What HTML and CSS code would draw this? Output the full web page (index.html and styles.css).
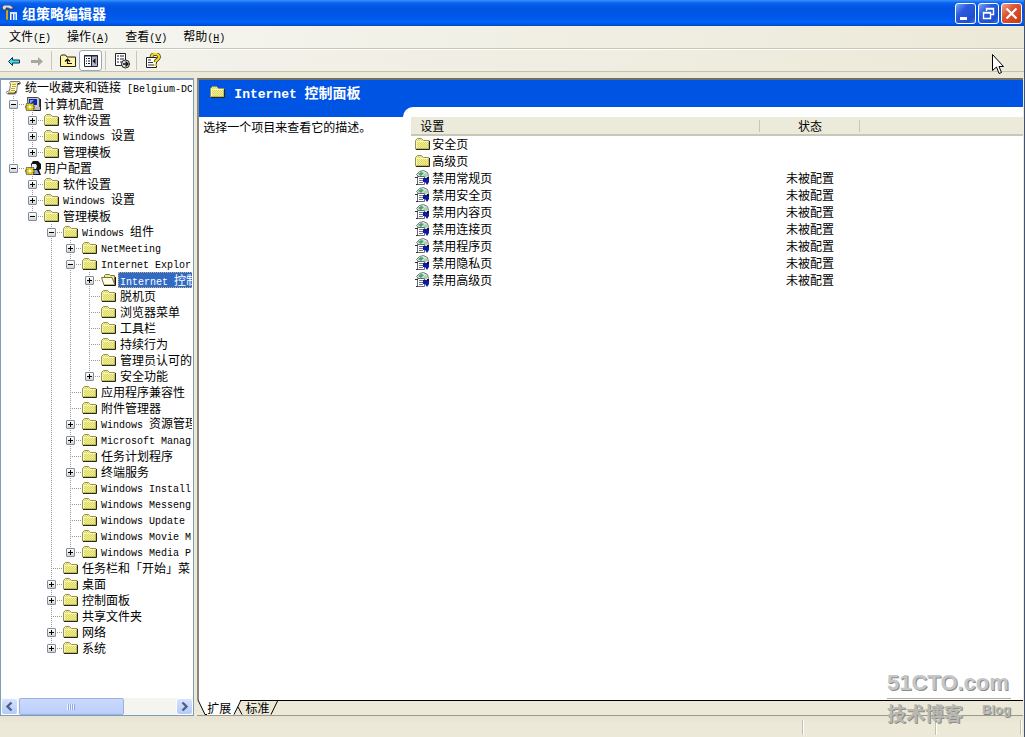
FILE: index.html
```html
<!DOCTYPE html>
<html lang="zh-CN">
<head>
<meta charset="utf-8">
<title>组策略编辑器</title>
<link rel="stylesheet" href="styles.css">
</head>
<body>
<svg class="defs" aria-hidden="true">
  <defs>
    <pattern id="dither" width="2" height="2" patternUnits="userSpaceOnUse"><rect width="2" height="2" fill="#f3f09c"/><rect width="1" height="1" fill="#dcd65a"/><rect x="1" y="1" width="1" height="1" fill="#dcd65a"/></pattern>
    <symbol id="folder" viewBox="0 0 16 16">
      <path d="M.5 13V4.500l2-2h4l2 2h5.500V13z" fill="url(#dither)" stroke="#96925a"/>
      <path d="M1.500 12V5.500h12" fill="none" stroke="#f8f6b8"/>
      <path d="M1 13.500h13.500V5" fill="none" stroke="#2a2914"/>
    </symbol>
    <symbol id="folder-open" viewBox="0 0 16 16">
      <path d="M3.500 12V3.500l1-1h4l1 1h4V13" fill="#f0ec98" stroke="#77743c"/>
      <path d="M.5 5.500h10.500l3 7.500H3z" fill="#fffde0" stroke="#77743c"/>
      <path d="M3 13.500h11.500V5" fill="none" stroke="#111"/>
    </symbol>
    <symbol id="scroll" viewBox="0 0 16 16">
      <path d="M4.500 1.500h9l1 1.500-1 1.500h-2l-1 8-1 1.500h-8l-1-1.500 1-1.500h2l1-7-1-1z" fill="#fffbe0" stroke="#777"/>
      <path d="M6 4.500h4M6 6.500h4M5 8.500h4M5 10.500h4" stroke="#c2ad21"/>
      <path d="M11 4l3-1M2 13h7l1-2" fill="none" stroke="#111"/>
      <path d="M5 3h7M2 12h6" stroke="#ecd83b"/>
    </symbol>
    <symbol id="gear" viewBox="0 0 10 8">
      <path d="M4 0h2v1l2-1 1 1-1 2h2v2H8l1 2-1 1-2-1v1H4V7L2 8 1 7l1-2H0V3h2L1 1l1-1 2 1z" fill="#e5cf22" stroke="#333" stroke-width=".6"/>
      <circle cx="5" cy="4" r="1.300" fill="#fff"/>
    </symbol>
    <symbol id="computer" viewBox="0 0 16 16">
      <path d="M2.500 1.500h10l2 1v9H3z" fill="#c6c9d6" stroke="#444"/>
      <path d="M4 3h8v6H4z" fill="#1227a8"/><path d="M5 4h4L5 8z" fill="#6aa2ff"/>
      <path d="M6 11h9v3H6z" fill="#b9bcc8"/><path d="M15.500 3v11.500H7" fill="none" stroke="#222"/>
      <use href="#gear" x="0" y="7" width="10" height="8"/>
    </symbol>
    <symbol id="user" viewBox="0 0 16 16">
      <path d="M6 4l2-3h5l3 3v5l-2 1 2 5H8z" fill="#111"/>
      <path d="M7 4h4l1 2-1 3H8l-1-2z" fill="#e8edf6"/><path d="M9 10h3l2 4H9z" fill="#8fa6e0"/>
      <use href="#gear" x="0" y="7" width="10" height="8"/>
    </symbol>
    <symbol id="policy" viewBox="0 0 16 16">
      <path d="M1.500 4.500l3-3 4-1 4 2 1 4-2 2-7-1z" fill="#dfe4e2" stroke="#777"/>
      <path d="M3 4l3-2 3 1-3 3z" fill="#3aa866"/><path d="M8 5l3-2 2 3-3 1z" fill="#9ad8ac"/>
      <path d="M2.500 6.500h7v8h-7z" fill="#fff" stroke="#667"/>
      <path d="M4 8.500h4M4 10.500h4M4 12.500h4" stroke="#6d7386"/>
      <path d="M8 8h6v4l-2 3-2-3H8z" fill="#1018a8"/><path d="M12 7h2v2h-2z" fill="#111"/><path d="M0 7h3v1H0zM1 14h2v1H1z" fill="#333"/>
    </symbol>
  </defs>
</svg>

<div class="window">
  <header class="titlebar">
    <svg class="app-icon" viewBox="0 0 16 16"><path d="M0 2l2-2h6l3 2v2H8L6 3H4v2H1z" fill="#d8d8d8" stroke="#333" stroke-width=".8"/><path d="M4 5h2v10H4z" fill="#e5c832" stroke="#554b10" stroke-width=".5"/><path d="M8 15V8h1.500v7M11 15V8h1.500v7M13.500 15V8H15v7" fill="#fff"/><path d="M8 7h7v2H8z" fill="#dfe3ee"/></svg>
    <h1 class="window-title">组策略编辑器</h1>
    <div class="window-buttons">
      <button class="win-btn" aria-label="最小化"><svg viewBox="0 0 19 19"><path d="M4 13h7v3H4z" fill="#fff"/></svg></button>
      <button class="win-btn" aria-label="还原"><svg viewBox="0 0 19 19"><path d="M7.500 7V4.500h7v6H12M7 5h8M4.500 8.500h7v6h-7zM4 9h8" fill="none" stroke="#fff" stroke-width="1.400"/></svg></button>
      <button class="win-btn close" aria-label="关闭"><svg viewBox="0 0 19 19"><path d="M4.500 4.500l10 10M14.500 4.500l-10 10" stroke="#fff" stroke-width="2.200"/></svg></button>
    </div>
  </header>

  <nav class="menubar">
    <button class="menu">文件<span class="lat">(<u>F</u>)</span></button>
    <button class="menu">操作<span class="lat">(<u>A</u>)</span></button>
    <button class="menu">查看<span class="lat">(<u>V</u>)</span></button>
    <button class="menu">帮助<span class="lat">(<u>H</u>)</span></button>
  </nav>

  <div class="toolbar">
    <button class="tool" aria-label="后退"><svg viewBox="0 0 16 16"><path d="M2.500 8.500l4-4V7h7v3h-7v2.500z" fill="#45dfe8" stroke="#062f50"/></svg></button>
    <button class="tool" aria-label="前进" disabled><svg viewBox="0 0 16 16"><path d="M14 8.500L9 4v3H2v3h7v3z" fill="#aaa89c"/></svg></button>
    <span class="sep"></span>
    <button class="tool" aria-label="上一级"><svg viewBox="0 0 16 16"><path d="M.5 13.500v-10l1-1.500h4l1.500 2h8.500v9.500z" fill="#fff7a0" stroke="#222"/><path d="M7.500 6v4.500H12M5 8.500l2.500-2.500L10 8.500" fill="none" stroke="#111" stroke-width="1.200"/></svg></button>
    <button class="tool pressed" aria-label="显示/隐藏控制台树"><svg viewBox="0 0 16 16"><path d="M1.500 2.500h13v11h-13z" fill="#fff" stroke="#223"/><path d="M8 3h6v10H8z" fill="#aeb4cf"/><path d="M1 3h14M8.500 3v10" stroke="#223"/><path d="M3 5.500h1M5 5.500h2M3 8h1M5 8h2M3 10.500h1M5 10.500h2" stroke="#112"/><path d="M12.500 5v6l-3-3z" fill="#111"/></svg></button>
    <span class="sep"></span>
    <button class="tool" aria-label="导出列表"><svg viewBox="0 0 16 16"><path d="M1.500.5h10v12h-10z" fill="#fff" stroke="#222"/><path d="M3 3h2M6 3h4M3 6h2M6 6h4M3 9h2M6 9h2" stroke="#223"/><circle cx="11.500" cy="11" r="4" fill="#dedfe8" stroke="#222"/><path d="M9 11h5M11.500 8.500L14 11l-2.500 2.500" fill="none" stroke="#111" stroke-width="1.400"/></svg></button>
    <span class="sep"></span>
    <button class="tool" aria-label="帮助"><svg viewBox="0 0 16 16"><path d="M1.500 4.500h10v10h-10z" fill="#fff" stroke="#222"/><path d="M3 7h3M3 9.500h5M3 12h6" stroke="#334"/><path d="M6.500 4c0-4 7.500-4 7.500 0 0 3-3.500 2.500-3.500 5" fill="none" stroke="#222" stroke-width="3.600"/><path d="M6.500 4c0-4 7.500-4 7.500 0 0 3-3.500 2.500-3.500 5M10.500 10.500v2.500" fill="none" stroke="#f4dd20" stroke-width="2.200"/></svg></button>
  </div>

  <main class="panes">
    <aside class="tree-pane">
      <div class="tree">
        <div class="root"><svg class="icon"><use href="#scroll"/></svg><span class="label">统一收藏夹和链接<span class="lat"> [Belgium-DC</span></span></div>
        <ul class="branch">
          <li><div class="node"><span class="twig"><button class="toggle open" aria-label="折叠"></button></span><svg class="icon"><use href="#computer"/></svg><span class="label">计算机配置</span></div>
            <ul>
              <li><div class="node"><span class="twig"><button class="toggle" aria-label="展开"></button></span><svg class="icon"><use href="#folder"/></svg><span class="label">软件设置</span></div></li>
              <li><div class="node"><span class="twig"><button class="toggle" aria-label="展开"></button></span><svg class="icon"><use href="#folder"/></svg><span class="label"><span class="lat">Windows </span>设置</span></div></li>
              <li><div class="node"><span class="twig"><button class="toggle" aria-label="展开"></button></span><svg class="icon"><use href="#folder"/></svg><span class="label">管理模板</span></div></li>
            </ul>
          </li>
          <li><div class="node"><span class="twig"><button class="toggle open" aria-label="折叠"></button></span><svg class="icon"><use href="#user"/></svg><span class="label">用户配置</span></div>
            <ul>
              <li><div class="node"><span class="twig"><button class="toggle" aria-label="展开"></button></span><svg class="icon"><use href="#folder"/></svg><span class="label">软件设置</span></div></li>
              <li><div class="node"><span class="twig"><button class="toggle" aria-label="展开"></button></span><svg class="icon"><use href="#folder"/></svg><span class="label"><span class="lat">Windows </span>设置</span></div></li>
              <li><div class="node"><span class="twig"><button class="toggle open" aria-label="折叠"></button></span><svg class="icon"><use href="#folder"/></svg><span class="label">管理模板</span></div>
                <ul>
                  <li><div class="node"><span class="twig"><button class="toggle open" aria-label="折叠"></button></span><svg class="icon"><use href="#folder"/></svg><span class="label"><span class="lat">Windows </span>组件</span></div>
                    <ul>
                      <li><div class="node"><span class="twig"><button class="toggle" aria-label="展开"></button></span><svg class="icon"><use href="#folder"/></svg><span class="label"><span class="lat">NetMeeting</span></span></div></li>
                      <li><div class="node"><span class="twig"><button class="toggle open" aria-label="折叠"></button></span><svg class="icon"><use href="#folder"/></svg><span class="label"><span class="lat">Internet Explor</span></span></div>
                        <ul>
                          <li><div class="node"><span class="twig"><button class="toggle" aria-label="展开"></button></span><svg class="icon"><use href="#folder-open"/></svg><span class="label selected"><span class="lat">Internet </span>控制</span></div></li>
                          <li><div class="node"><span class="twig"></span><svg class="icon"><use href="#folder"/></svg><span class="label">脱机页</span></div></li>
                          <li><div class="node"><span class="twig"></span><svg class="icon"><use href="#folder"/></svg><span class="label">浏览器菜单</span></div></li>
                          <li><div class="node"><span class="twig"></span><svg class="icon"><use href="#folder"/></svg><span class="label">工具栏</span></div></li>
                          <li><div class="node"><span class="twig"></span><svg class="icon"><use href="#folder"/></svg><span class="label">持续行为</span></div></li>
                          <li><div class="node"><span class="twig"></span><svg class="icon"><use href="#folder"/></svg><span class="label">管理员认可的</span></div></li>
                          <li><div class="node"><span class="twig"><button class="toggle" aria-label="展开"></button></span><svg class="icon"><use href="#folder"/></svg><span class="label">安全功能</span></div></li>
                        </ul>
                      </li>
                      <li><div class="node"><span class="twig"></span><svg class="icon"><use href="#folder"/></svg><span class="label">应用程序兼容性</span></div></li>
                      <li><div class="node"><span class="twig"></span><svg class="icon"><use href="#folder"/></svg><span class="label">附件管理器</span></div></li>
                      <li><div class="node"><span class="twig"><button class="toggle" aria-label="展开"></button></span><svg class="icon"><use href="#folder"/></svg><span class="label"><span class="lat">Windows </span>资源管理</span></div></li>
                      <li><div class="node"><span class="twig"><button class="toggle" aria-label="展开"></button></span><svg class="icon"><use href="#folder"/></svg><span class="label"><span class="lat">Microsoft Manag</span></span></div></li>
                      <li><div class="node"><span class="twig"></span><svg class="icon"><use href="#folder"/></svg><span class="label">任务计划程序</span></div></li>
                      <li><div class="node"><span class="twig"><button class="toggle" aria-label="展开"></button></span><svg class="icon"><use href="#folder"/></svg><span class="label">终端服务</span></div></li>
                      <li><div class="node"><span class="twig"></span><svg class="icon"><use href="#folder"/></svg><span class="label"><span class="lat">Windows Install</span></span></div></li>
                      <li><div class="node"><span class="twig"></span><svg class="icon"><use href="#folder"/></svg><span class="label"><span class="lat">Windows Messeng</span></span></div></li>
                      <li><div class="node"><span class="twig"></span><svg class="icon"><use href="#folder"/></svg><span class="label"><span class="lat">Windows Update</span></span></div></li>
                      <li><div class="node"><span class="twig"></span><svg class="icon"><use href="#folder"/></svg><span class="label"><span class="lat">Windows Movie M</span></span></div></li>
                      <li><div class="node"><span class="twig"><button class="toggle" aria-label="展开"></button></span><svg class="icon"><use href="#folder"/></svg><span class="label"><span class="lat">Windows Media P</span></span></div></li>
                    </ul>
                  </li>
                  <li><div class="node"><span class="twig"></span><svg class="icon"><use href="#folder"/></svg><span class="label">任务栏和「开始」菜</span></div></li>
                  <li><div class="node"><span class="twig"><button class="toggle" aria-label="展开"></button></span><svg class="icon"><use href="#folder"/></svg><span class="label">桌面</span></div></li>
                  <li><div class="node"><span class="twig"><button class="toggle" aria-label="展开"></button></span><svg class="icon"><use href="#folder"/></svg><span class="label">控制面板</span></div></li>
                  <li><div class="node"><span class="twig"></span><svg class="icon"><use href="#folder"/></svg><span class="label">共享文件夹</span></div></li>
                  <li><div class="node"><span class="twig"><button class="toggle" aria-label="展开"></button></span><svg class="icon"><use href="#folder"/></svg><span class="label">网络</span></div></li>
                  <li><div class="node"><span class="twig"><button class="toggle" aria-label="展开"></button></span><svg class="icon"><use href="#folder"/></svg><span class="label">系统</span></div></li>
                </ul>
              </li>
            </ul>
          </li>
        </ul>
      </div>
      <div class="scrollbar">
        <button class="scroll-btn" aria-label="向左滚动"><svg viewBox="0 0 15 15"><path d="M9.500 3.500l-4 4 4 4" fill="none" stroke="#4d6185" stroke-width="2.400"/></svg></button>
        <div class="track"><div class="thumb"><span class="grip"></span></div></div>
        <button class="scroll-btn" aria-label="向右滚动"><svg viewBox="0 0 15 15"><path d="M5.500 3.500l4 4-4 4" fill="none" stroke="#4d6185" stroke-width="2.400"/></svg></button>
      </div>
    </aside>

    <section class="detail-pane">
      <div class="detail">
        <div class="banner"><svg class="icon"><use href="#folder"/></svg><h2 class="banner-title"><span class="lat-lg">Internet </span>控制面板</h2></div>
        <div class="detail-body">
          <p class="hint">选择一个项目来查看它的描述。</p>
          <div class="list-wrap">
            <table class="list">
              <thead><tr><th class="col-name">设置</th><th class="col-state">状态</th><th></th></tr></thead>
              <tbody>
                <tr><td><span class="item"><svg class="icon"><use href="#folder"/></svg>安全页</span></td><td></td><td></td></tr>
                <tr><td><span class="item"><svg class="icon"><use href="#folder"/></svg>高级页</span></td><td></td><td></td></tr>
                <tr><td><span class="item"><svg class="icon"><use href="#policy"/></svg>禁用常规页</span></td><td>未被配置</td><td></td></tr>
                <tr><td><span class="item"><svg class="icon"><use href="#policy"/></svg>禁用安全页</span></td><td>未被配置</td><td></td></tr>
                <tr><td><span class="item"><svg class="icon"><use href="#policy"/></svg>禁用内容页</span></td><td>未被配置</td><td></td></tr>
                <tr><td><span class="item"><svg class="icon"><use href="#policy"/></svg>禁用连接页</span></td><td>未被配置</td><td></td></tr>
                <tr><td><span class="item"><svg class="icon"><use href="#policy"/></svg>禁用程序页</span></td><td>未被配置</td><td></td></tr>
                <tr><td><span class="item"><svg class="icon"><use href="#policy"/></svg>禁用隐私页</span></td><td>未被配置</td><td></td></tr>
                <tr><td><span class="item"><svg class="icon"><use href="#policy"/></svg>禁用高级页</span></td><td>未被配置</td><td></td></tr>
              </tbody>
            </table>
          </div>
        </div>
      </div>
      <div class="tabs">
        <svg class="edge" viewBox="0 0 10 15"><path d="M1 0h9v15H8z" fill="#fff"/><path d="M1 0l7 14.500h2" fill="none" stroke="#000"/></svg>
        <button class="tab active">扩展</button>
        <svg class="edge wide" viewBox="0 0 14 15"><path d="M0 0h10L3 15H0z" fill="#fff"/><path d="M10 0L3 14.500M7 7l4 7.500M9 .5h5" fill="none" stroke="#000"/></svg>
        <button class="tab">标准</button>
        <svg class="edge" viewBox="0 0 10 15"><path d="M9 0L2 14.500M0 .5h10" fill="none" stroke="#000"/></svg>
        <span class="tab-fill"></span>
      </div>
    </section>
  </main>

  <footer class="statusbar"><span class="cell grow"></span><span class="cell mid"></span><span class="cell end"></span></footer>
</div>

<div class="watermark">
  <div class="mark-name">51CTO.com</div>
  <div class="mark-sub"><span class="mark-cn">技术博客</span><span class="mark-en">Blog</span></div>
</div>
<svg class="cursor" viewBox="0 0 12 21"><path d="M.5.5v16l4-3.500 2.500 6.500 2.500-1-2.500-6h4.500z" fill="#fff" stroke="#000"/></svg>
</body>
</html>
```
FILE: styles.css
```css
* { box-sizing: border-box; }

html, body { height: 100%; }

body {
  margin: 0;
  overflow: hidden;
  background: #ece9d8;
  color: #000;
  font: 12px/16px "Noto Sans CJK SC", sans-serif;
}

button {
  margin: 0;
  padding: 0;
  border: 0;
  background: none;
  color: inherit;
  font: inherit;
}

h1, h2, p, ul { margin: 0; padding: 0; }
ul { list-style: none; }
svg { display: block; flex: none; }

.defs { position: absolute; width: 0; height: 0; }
.lat { font-family: "Liberation Mono", monospace; font-size: 10px; white-space: pre; }
.lat-lg { font-family: "Liberation Mono", monospace; font-size: 13px; white-space: pre; }
.icon { width: 16px; height: 16px; }

.window {
  display: flex;
  flex-direction: column;
  height: 100vh;
  border-right: 1px solid #44536b;
}

/* Title bar */
.titlebar {
  display: flex;
  align-items: center;
  flex: none;
  height: 26px;
  padding: 0 2px;
  background: linear-gradient(#3a93ff 0, #0a62ee 3px, #0054e3 8px, #0058ea 18px, #0064fa 22px, #0048c8 26px);
}
.app-icon { width: 16px; height: 16px; }
.window-title {
  flex: 1;
  padding-left: 4px;
  color: #fff;
  font-size: 14px;
  font-weight: 700;
  line-height: 20px;
}
.window-buttons { display: flex; gap: 2px; }
.win-btn {
  width: 21px;
  height: 21px;
  border: 1px solid #fff;
  border-radius: 3px;
  background: linear-gradient(135deg, #7ea6f4, #2a5cdb 35%, #1f4fd0 80%, #3c79ee);
}
.win-btn.close { background: linear-gradient(135deg, #f0a088, #dd5230 40%, #c53a16); }

/* Menu and tool bars */
.menubar {
  display: flex;
  align-items: center;
  flex: none;
  gap: 16px;
  height: 23px;
  padding-left: 9px;
  border-bottom: 1px solid #c9c6b5;
  background: linear-gradient(90deg, #f6f6f2, #ece9d8);
}
.toolbar {
  display: flex;
  align-items: center;
  flex: none;
  height: 23px;
  padding-left: 2px;
  border-top: 1px solid #fff;
  border-bottom: 1px solid #c5c2b2;
  background: linear-gradient(90deg, #f4f3ee, #ece9d8);
}
.tool {
  display: flex;
  align-items: center;
  justify-content: center;
  width: 23px;
  height: 21px;
}
.tool svg { width: 16px; height: 16px; }
.tool.pressed { border: 1px solid #98a7bd; border-radius: 3px; background: #fff; }
.sep { width: 1px; height: 19px; margin: 0 4px 0 3px; background: #c9c6b5; }

/* Panes */
.panes {
  display: flex;
  flex: 1;
  gap: 3px;
  min-height: 0;
  padding-top: 6px;
  padding-right: 1px;
}
.tree-pane {
  display: flex;
  flex: none;
  flex-direction: column;
  width: 19%;
  border: 1px solid #7f9db9;
  border-top-width: 2px;
  background: #fff;
}
.tree { flex: 1; min-height: 0; margin-right: 1px; overflow: hidden; }
.root, .node { display: flex; align-items: center; height: 16px; white-space: nowrap; }
.root { gap: 1px; padding-left: 5px; }
.branch { padding-left: 3px; }
.tree li {
  background: repeating-linear-gradient(#999 0 1px, transparent 1px 2px) 9px 0 / 1px 100% no-repeat;
}
.tree li:last-child { background-size: 1px 8px; }
.tree li > ul { padding-left: 19px; }
.node { gap: 1px; }
.twig {
  display: flex;
  align-items: center;
  flex: none;
  width: 20px;
  height: 16px;
  padding-left: 5px;
  background: repeating-linear-gradient(90deg, #999 0 1px, transparent 1px 2px) 9px 8px / 11px 1px no-repeat;
}
.toggle {
  width: 9px;
  height: 9px;
  border: 1px solid #7d8ca6;
  border-radius: 1px;
  background:
    linear-gradient(#000, #000) center / 5px 1px no-repeat,
    linear-gradient(#000, #000) center / 1px 5px no-repeat,
    linear-gradient(#fff, #d6d3c8);
}
.toggle.open {
  background:
    linear-gradient(#000, #000) center / 5px 1px no-repeat,
    linear-gradient(#fff, #d6d3c8);
}
.label { padding: 0 2px; line-height: 16px; }
.selected { height: 16px; outline: 1px dotted #d0b070; outline-offset: -1px; background: #316ac5; color: #fff; }

.scrollbar { display: flex; flex: none; height: 17px; background: #f5f4ef; }
.scroll-btn {
  width: 17px;
  height: 17px;
  border: 1px solid #fff;
  border-radius: 3px;
  background: linear-gradient(#d6e2fe, #b6caf8);
}
.track { flex: 1; padding: 0 1px; }
.thumb {
  display: flex;
  align-items: center;
  justify-content: center;
  width: 67%;
  height: 17px;
  border: 1px solid #98b0e6;
  border-radius: 2px;
  background: linear-gradient(#cbdafd, #bacdfb);
}
.grip { width: 8px; height: 6px; background: repeating-linear-gradient(90deg, #eef4fe 0 1px, #8ca8e8 1px 2px); }

.detail-pane { display: flex; flex: 1; flex-direction: column; min-width: 0; }
.detail {
  display: flex;
  flex: 1;
  flex-direction: column;
  border-top: 2px solid #716f64;
  border-left: 2px solid #8a887a;
  background: #fff;
}
.banner {
  display: flex;
  align-items: flex-start;
  gap: 8px;
  height: 27px;
  padding: 4px 11px 0;
  background: #0054e3;
  color: #fff;
}
.banner-title { font-size: 14px; font-weight: 700; line-height: 16px; }
.detail-body {
  display: grid;
  grid-template-columns: 204px 1fr;
  flex: 1;
  background: linear-gradient(#0054e3, #0054e3) 0 0 / 100% 10px no-repeat;
}
.hint { padding: 12px 4px 0; white-space: nowrap; }
.list-wrap { padding: 10px 0 0 8px; border-top-left-radius: 10px; background: #fff; }
.list { width: 100%; border-collapse: collapse; table-layout: fixed; }
.list th {
  height: 18px;
  padding: 0;
  border-bottom: 2px solid #cbc7b8;
  background: linear-gradient(#c9c6b5, #c9c6b5) 100% 3px / 1px 12px no-repeat #ebeadb;
  font-weight: 400;
  line-height: 16px;
}
.list th:last-child { background: #ebeadb; }
.list .col-name { width: 57%; padding-left: 9px; text-align: left; }
.list .col-state { width: 100px; }
.list td { height: 17px; padding: 0; line-height: 16px; text-align: center; white-space: nowrap; }
.item { display: flex; gap: 1px; padding-left: 4px; }

.tabs { display: flex; flex: none; height: 16px; border-bottom: 1px solid #9d9a8b; }
.edge { width: 10px; height: 15px; }
.edge.wide { width: 14px; }
.tab { height: 15px; border-top: 1px solid #000; line-height: 14px; }
.tab.active { border-top-color: #fff; background: #fff; }
.tab-fill { flex: 1; border-top: 1px solid #000; }

/* Status bar */
.statusbar { display: flex; flex: none; height: 21px; padding: 4px 3px 2px 0; background: linear-gradient(#e6e3d3, #ece9d8 8px); }
.cell { border-right: 1px solid #c3c0b0; box-shadow: 1px 0 #fff; }
.cell.grow { flex: 1; }
.cell.mid { width: 133px; }
.cell.end { width: 85px; }

/* Overlays */
.watermark { position: absolute; right: 14px; bottom: 10px; width: 124px; color: #c6c6c6; text-shadow: 1px 1px #8c8c8c; }
.mark-name { font: 700 22px/30px "Liberation Sans", sans-serif; white-space: nowrap; }
.mark-sub { display: flex; justify-content: space-between; border-top: 1px solid #aaa; color: #b8b8b0; }
.mark-cn { font-size: 19px; font-weight: 700; line-height: 28px; }
.mark-en { font: 700 13px/22px "Liberation Sans", sans-serif; }
.cursor { position: absolute; top: 54px; left: 992px; width: 12px; height: 21px; }
```
